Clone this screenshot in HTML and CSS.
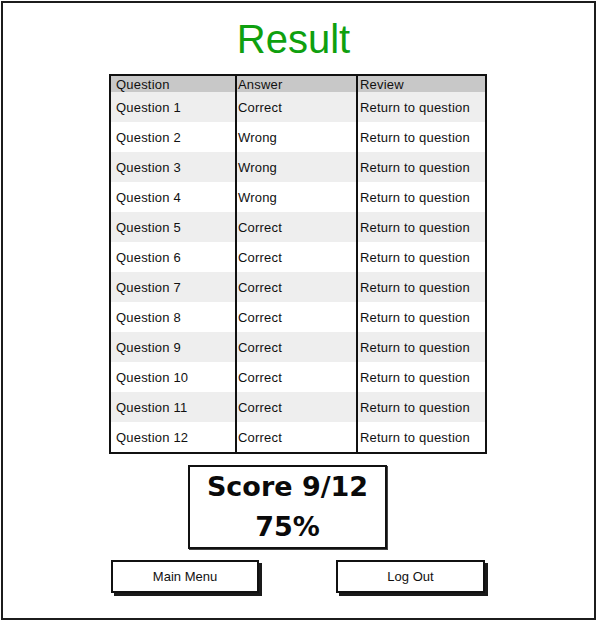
FILE: index.html
```html
<!DOCTYPE html>
<html>
<head>
<meta charset="utf-8">
<link rel="stylesheet" href="styles.css">
</head>
<body>
<div class="frame">
  <h1 class="title">Result</h1>
  <div class="table">
    <div class="row head"><div class="c c1">Question</div><div class="c c2">Answer</div><div class="c c3">Review</div></div>
    <div class="row alt"><div class="c c1">Question 1</div><div class="c c2">Correct</div><div class="c c3">Return to question</div></div>
    <div class="row"><div class="c c1">Question 2</div><div class="c c2">Wrong</div><div class="c c3">Return to question</div></div>
    <div class="row alt"><div class="c c1">Question 3</div><div class="c c2">Wrong</div><div class="c c3">Return to question</div></div>
    <div class="row"><div class="c c1">Question 4</div><div class="c c2">Wrong</div><div class="c c3">Return to question</div></div>
    <div class="row alt"><div class="c c1">Question 5</div><div class="c c2">Correct</div><div class="c c3">Return to question</div></div>
    <div class="row"><div class="c c1">Question 6</div><div class="c c2">Correct</div><div class="c c3">Return to question</div></div>
    <div class="row alt"><div class="c c1">Question 7</div><div class="c c2">Correct</div><div class="c c3">Return to question</div></div>
    <div class="row"><div class="c c1">Question 8</div><div class="c c2">Correct</div><div class="c c3">Return to question</div></div>
    <div class="row alt"><div class="c c1">Question 9</div><div class="c c2">Correct</div><div class="c c3">Return to question</div></div>
    <div class="row"><div class="c c1">Question 10</div><div class="c c2">Correct</div><div class="c c3">Return to question</div></div>
    <div class="row alt"><div class="c c1">Question 11</div><div class="c c2">Correct</div><div class="c c3">Return to question</div></div>
    <div class="row"><div class="c c1">Question 12</div><div class="c c2">Correct</div><div class="c c3">Return to question</div></div>
  </div>
  <div class="score">
    <div class="score-line">Score 9/12</div>
    <div class="score-line">75%</div>
  </div>
  <div class="buttons">
    <div class="btn btn-main">Main Menu</div>
    <div class="btn btn-out">Log Out</div>
  </div>
</div>
</body>
</html>
```

FILE: styles.css
```css
html, body {
  margin: 0;
  padding: 0;
  background: #ffffff;
}

.frame {
  box-sizing: border-box;
  margin: 1px 0 0 1px;
  width: 595px;
  height: 619px;
  border: 2px solid #1c1c1c;
  display: flex;
  flex-direction: column;
  align-items: flex-start;
  font-family: "Liberation Sans", Arial, sans-serif;
  color: #111111;
}

.title {
  margin: 13px 0 0 0;
  align-self: stretch;
  padding-right: 10px;
  text-align: center;
  font-family: "Liberation Sans", Arial, sans-serif;
  font-weight: normal;
  font-size: 40px;
  line-height: 46px;
  color: #0fa00f;
}

.table {
  margin: 12px 0 0 106px;
  width: 378px;
  box-sizing: border-box;
  border: 2px solid #111111;
  display: flex;
  flex-direction: column;
}

.row {
  display: grid;
  grid-template-columns: 124px 121px 129px;
  height: 30px;
  background: #ffffff;
}

.row.alt {
  background: #eeeeee;
}

.row.head {
  height: 16px;
  background: #c8c8c8;
}

.c {
  display: flex;
  align-items: center;
  font-size: 13px;
  line-height: 15px;
  letter-spacing: 0.2px;
  white-space: nowrap;
}

.c1 {
  padding-left: 5px;
}

.c2 {
  border-left: 2px solid #111111;
  padding-left: 1px;
}

.c3 {
  border-left: 2px solid #111111;
  padding-left: 2px;
}

.score {
  margin: 11px 0 0 185px;
  box-sizing: border-box;
  width: 199px;
  height: 84px;
  border: 2px solid #111111;
  box-shadow: 1px 1px 0 #444444;
  display: flex;
  flex-direction: column;
  align-items: center;
}

.score-line {
  font-family: "DejaVu Sans", Verdana, sans-serif;
  font-weight: bold;
  font-size: 27px;
  line-height: 40px;
  color: #0a0a0a;
}

.buttons {
  margin: 11px 0 0 108px;
  display: flex;
  gap: 77px;
}

.btn {
  box-sizing: border-box;
  height: 33px;
  border: 2px solid #111111;
  box-shadow: 3px 3px 0 #1a1a1a;
  display: flex;
  align-items: center;
  justify-content: center;
  font-size: 13px;
  color: #111111;
  background: #ffffff;
}

.btn-main {
  width: 148px;
}

.btn-out {
  width: 149px;
}
```
